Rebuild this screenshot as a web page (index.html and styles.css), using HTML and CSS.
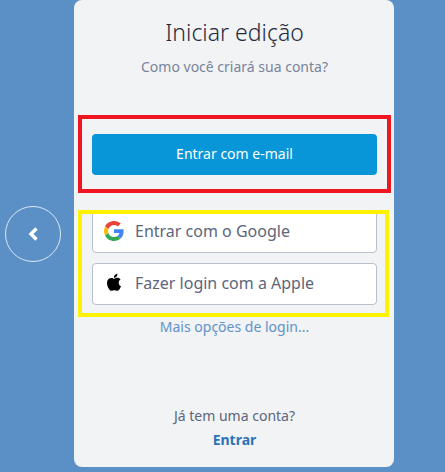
FILE: index.html
```html
<!DOCTYPE html>
<html lang="pt-BR">
<head>
<meta charset="utf-8">
<meta name="viewport" content="width=device-width, initial-scale=1">
<title>Iniciar edição</title>
<link rel="stylesheet" href="styles.css">
</head>
<body>
<div class="page">
  <button class="back" type="button" aria-label="Voltar">
    <svg width="12" height="16" viewBox="0 0 12 16" aria-hidden="true"><path d="M9.500 2.500 4 8l5.500 5.500" fill="none" stroke="#fff" stroke-width="3.400"/></svg>
  </button>
  <main class="card">
    <h1 class="title">Iniciar edição</h1>
    <p class="subtitle">Como você criará sua conta?</p>
    <div class="group group-email">
      <button class="btn btn-primary" type="button">Entrar com e-mail</button>
    </div>
    <div class="group group-social">
      <button class="btn btn-social" type="button">
        <svg class="icon" viewBox="0 0 48 48" aria-hidden="true">
          <path fill="#EA4335" d="M24 9.500c3.540 0 6.710 1.220 9.210 3.600l6.850-6.850C35.900 2.380 30.470 0 24 0 14.620 0 6.510 5.380 2.560 13.220l7.980 6.190C12.430 13.720 17.740 9.500 24 9.500z"/>
          <path fill="#4285F4" d="M46.980 24.550c0-1.570-.15-3.090-.38-4.550H24v9.020h12.940c-.58 2.960-2.260 5.480-4.780 7.180l7.730 6c4.510-4.180 7.090-10.360 7.090-17.650z"/>
          <path fill="#FBBC05" d="M10.530 28.590c-.48-1.450-.76-2.990-.76-4.590s.27-3.140.76-4.590l-7.980-6.190C.92 16.460 0 20.120 0 24s.92 7.540 2.560 10.780l7.970-6.190z"/>
          <path fill="#34A853" d="M24 48c6.480 0 11.930-2.130 15.890-5.810l-7.730-6c-2.150 1.450-4.920 2.300-8.160 2.300-6.260 0-11.570-4.220-13.470-9.910l-7.980 6.190C6.510 42.620 14.620 48 24 48z"/>
        </svg>
        <span>Entrar com o Google</span>
      </button>
      <button class="btn btn-social" type="button">
        <svg class="icon" viewBox="-2 -1 28 28" aria-hidden="true">
          <path d="M12.152 6.896c-.948 0-2.415-1.078-3.960-1.040-2.040.027-3.910 1.183-4.961 3.014-2.117 3.675-.546 9.103 1.519 12.090 1.013 1.454 2.208 3.090 3.792 3.039 1.520-.065 2.090-.987 3.935-.987 1.831 0 2.350.987 3.960.948 1.637-.026 2.676-1.480 3.676-2.948 1.156-1.688 1.636-3.325 1.662-3.415-.039-.013-3.182-1.221-3.220-4.857-.026-3.040 2.480-4.494 2.597-4.559-1.429-2.090-3.623-2.324-4.390-2.376-2-.156-3.675 1.090-4.610 1.090zM15.530 3.830c.843-1.012 1.400-2.427 1.245-3.830-1.207.052-2.662.805-3.532 1.818-.780.896-1.454 2.338-1.273 3.714 1.338.104 2.715-.688 3.559-1.701"/>
        </svg>
        <span>Fazer login com a Apple</span>
      </button>
    </div>
    <a class="more" href="#">Mais opções de login...</a>
    <p class="question">Já tem uma conta?</p>
    <a class="signin" href="#">Entrar</a>
  </main>
</div>
</body>
</html>
```
FILE: styles.css
```css
* { box-sizing: border-box; }

body {
  margin: 0;
  background: #5b90c6;
  font-family: "Noto Sans", sans-serif;
  font-size: 14px;
  line-height: 24px;
  color: #5c667b;
}

.page {
  display: grid;
  grid-template-columns: 74px minmax(0, 1fr) 51px;
  align-items: center;
}

.back {
  display: flex;
  align-items: center;
  justify-content: center;
  justify-self: center;
  width: 56px;
  height: 56px;
  margin-right: 8px;
  padding: 0;
  border: 1px solid #dce8f4;
  border-radius: 50%;
  background: transparent;
}

.card {
  display: flex;
  flex-direction: column;
  align-items: center;
  padding: 16px 3px 15px 4px;
  border-radius: 8px;
  background: #f1f3f5;
}

.title {
  margin: 0;
  font-size: 23px;
  font-weight: 300;
  line-height: 32px;
  color: #1f2a40;
}

.subtitle {
  margin: 7px 0 0;
  color: #79839a;
}

.group {
  position: relative;
  display: flex;
  flex-direction: column;
  align-self: stretch;
}

.group-email {
  margin-top: 36px;
  padding: 15px 10px 14px;
  border: 4px solid #ee1620;
}

.group-social {
  gap: 10px;
  margin-top: 18px;
  padding: 0 14px;
}

.group-social::after {
  content: "";
  position: absolute;
  inset: -1px 2px -12px 0;
  border: 4px solid #fff200;
  pointer-events: none;
}

.btn {
  height: 42px;
  border-radius: 4px;
  font: inherit;
}

.btn-primary {
  height: 41px;
  padding: 0 0 2px;
  border: 0;
  background: #0896d9;
  color: #fff;
}

.btn-social {
  display: flex;
  align-items: center;
  gap: 11px;
  padding: 0 11px 2px;
  border: 1px solid #b9c0cd;
  background: #fff;
  color: #5c667b;
  font-size: 16px;
}

.icon {
  width: 20px;
  height: 20px;
}

.more {
  margin-top: 10px;
  color: #6292c8;
  text-decoration: none;
}

.question {
  margin: 65px 0 0;
}

.signin {
  color: #2b74b8;
  font-weight: 700;
  text-decoration: none;
}
```
